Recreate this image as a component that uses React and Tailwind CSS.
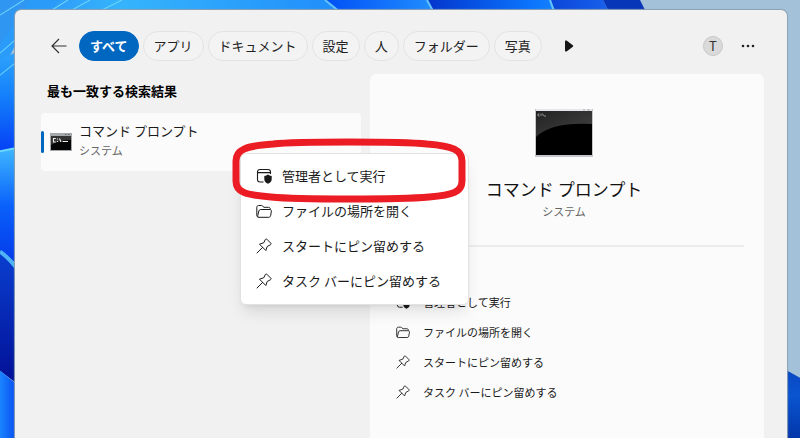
import clsx from "clsx";

const filters = ["すべて", "アプリ", "ドキュメント", "設定", "人", "フォルダー", "写真"];

const AdminIcon = ({ className }) => (
  <svg viewBox="0 0 16 16" fill="none" stroke="currentColor" className={className}>
    <path d="M7.5 14H4a2.5 2.5 0 0 1-2.5-2.5V4A2.5 2.5 0 0 1 4 1.5h8A2.5 2.5 0 0 1 14.500 4v2M1.500 4.600h13" strokeWidth="1.1" />
    <path d="M12 6.600c1.100.9 2.200 1.300 3.700 1.400v3.200c0 2.200-1.500 3.700-3.700 4.600-2.200-.9-3.700-2.400-3.700-4.600V8c1.500-.1 2.600-.5 3.700-1.400Z" fill="currentColor" stroke="none" />
  </svg>
);

const FolderIcon = ({ className }) => (
  <svg viewBox="0 0 16 16" fill="none" stroke="currentColor" strokeWidth="1" strokeLinejoin="round" className={className}>
    <path d="M2.500 14.300C1.400 14.100.8 13.400.8 12.300V4.300c0-1 .8-1.800 1.800-1.800h2.600c.5 0 .9.200 1.300.5l1.500 1.300h4.500c1 0 1.800.8 1.800 1.800v.4" />
    <path d="M4.700 6.500h9.200c1 0 1.600.8 1.500 1.700l-.8 4.600c-.2.900-.9 1.500-1.800 1.500H3c-.9 0-1.500-.7-1.300-1.500l1.200-4.900c.2-.8.900-1.400 1.800-1.400Z" />
  </svg>
);

const PinIcon = ({ className }) => (
  <svg viewBox="0 0 16 16" fill="none" stroke="currentColor" strokeWidth="1" strokeLinejoin="round" strokeLinecap="round" className={className}>
    <path d="M9.300 1.500c.3-.6 1-.7 1.500-.3l4 4c.4.500.3 1.200-.3 1.500L11.200 8.500 9.800 12.500 3.500 6.200l4-1.400ZM6.600 9.400 1 15" />
  </svg>
);

const actions = [
  { label: "管理者として実行", Icon: AdminIcon },
  { label: "ファイルの場所を開く", Icon: FolderIcon },
  { label: "スタートにピン留めする", Icon: PinIcon },
  { label: "タスク バーにピン留めする", Icon: PinIcon },
];

const Wallpaper = () => (
  <svg viewBox="0 0 800 438" preserveAspectRatio="none" className="absolute inset-0 h-full w-full" aria-hidden="true">
    <defs>
      <linearGradient id="top" x1="0" x2="1">
        <stop offset="0" stopColor="#2b8df5" />
        <stop offset=".35" stopColor="#35b4fc" />
        <stop offset="1" stopColor="#1f8cfb" />
      </linearGradient>
      <linearGradient id="mid" x1="0" x2="1">
        <stop offset="0" stopColor="#0050f5" />
        <stop offset="1" stopColor="#2390ff" />
      </linearGradient>
      <linearGradient id="deep" x1="0" x2="1">
        <stop offset="0" stopColor="#0435cc" />
        <stop offset=".75" stopColor="#0a72fb" />
        <stop offset="1" stopColor="#1684ff" />
      </linearGradient>
      <linearGradient id="fold" x1="0" x2="1">
        <stop offset="0" stopColor="#0a45d8" />
        <stop offset="1" stopColor="#1a63ee" />
      </linearGradient>
      <linearGradient id="left1" x1="0" x2="0" y1="0" y2="1">
        <stop offset="0" stopColor="#2fa5fb" />
        <stop offset=".45" stopColor="#1480fb" />
        <stop offset="1" stopColor="#0540f5" />
      </linearGradient>
      <linearGradient id="left2" x1="0" x2="0" y1="0" y2="1">
        <stop offset="0" stopColor="#3fb8ff" />
        <stop offset=".5" stopColor="#0a60fb" />
        <stop offset="1" stopColor="#0338e8" />
      </linearGradient>
      <linearGradient id="left3" x1="0" x2="0" y1="0" y2="1">
        <stop offset="0" stopColor="#0a3fd0" />
        <stop offset="1" stopColor="#020f94" />
      </linearGradient>
      <linearGradient id="left4" x1="0" x2="1" y1="0" y2="0">
        <stop offset="0" stopColor="#1a84ff" />
        <stop offset="1" stopColor="#0540ea" />
      </linearGradient>
      <linearGradient id="right" x1="0" x2="0" y1="0" y2="1">
        <stop offset="0" stopColor="#0a45c0" />
        <stop offset=".4" stopColor="#0a55d0" />
        <stop offset="1" stopColor="#0335a8" />
      </linearGradient>
    </defs>
    <rect width="800" height="438" fill="#a3c2d9" />
    <path d="M0 0H325L350 20H0Z" fill="url(#top)" />
    <path d="M325 0H427L438 20H350Z" fill="url(#mid)" />
    <path d="M427 0H550L560 20H438Z" fill="url(#deep)" />
    <path d="M550 0H603L613 20H560Z" fill="url(#fold)" />
    <path d="M603 0H640L650 20H613Z" fill="#0836b8" />
    <path d="M325 0L350 20M427 0L438 20M550 0L557 20" fill="none" stroke="#63c4f8" strokeWidth="2" />
    <path d="M0 0H60L0 45Z" fill="#2f96f2" />
    <path d="M0 45L30 0H60L20 36L0 75Z" fill="#2b9bfa" />
    <path d="M0 60L20 50V148L0 151Z" fill="url(#left1)" />
    <path d="M0 15L24 0M0 53L15 40M0 75L15 63M52 10L68 0M72 10L90 0M102 10L122 0" fill="none" stroke="#6cd4fb" strokeWidth="1" />
    <path d="M0 151L20 147V265L0 252Z" fill="url(#left2)" />
    <path d="M0 252Q12 260 20 275V385L0 370Z" fill="url(#left3)" />
    <path d="M0 251Q10 258 20 272" fill="none" stroke="#4fb4f5" strokeWidth="4" />
    <path d="M0 370L20 386V438H0Z" fill="url(#left4)" />
    <path d="M0 151L20 147" fill="none" stroke="#6cd8fb" strokeWidth="2" />
    <path d="M780 366L800 377V438H780Z" fill="url(#right)" />
  </svg>
);

const Header = () => (
  <header className="flex h-16 items-center pr-8 pl-9 pt-2">
    <button aria-label="戻る" className="mr-3 text-[#333]">
      <svg viewBox="0 0 16 16" fill="none" stroke="currentColor" strokeWidth="1.2" className="size-4">
        <path d="M15.500 8H1M8 1L1 8l7 7" />
      </svg>
    </button>
    <nav className="flex gap-1">
      {filters.map((name, i) => (
        <button
          key={name}
          className={clsx(
            "h-[30px] rounded-full border px-[10px] text-[13px] whitespace-nowrap",
            i === 0 ? "border-[#0067c0] bg-[#0067c0] font-bold text-white" : "border-[#e3e3e3] bg-[#f3f3f3] text-[#222]"
          )}
        >
          {name}
        </button>
      ))}
    </nav>
    <button aria-label="次へ" className="ml-[22px] text-[#161616]">
      <svg viewBox="0 0 10 12" fill="currentColor" className="h-3 w-[10px]">
        <path d="M1 1.400C1 .5 1.900.1 2.600.6L8.800 5.200c.5.400.5 1.200 0 1.600L2.600 11.400C1.900 11.900 1 11.500 1 10.600Z" />
      </svg>
    </button>
    <button className="ml-auto flex size-5 items-center justify-center rounded-full border border-[#c8c8c8] bg-[#dadada] text-[13px] text-[#333]">
      T
    </button>
    <button aria-label="オプション" className="ml-[18px] text-[#222]">
      <svg viewBox="0 0 14 4" fill="currentColor" className="h-1 w-[14px]">
        <circle cx="2" cy="2" r="1.300" />
        <circle cx="7" cy="2" r="1.300" />
        <circle cx="12" cy="2" r="1.300" />
      </svg>
    </button>
  </header>
);

const ContextMenu = () => (
  <div className="absolute top-10 left-[199px] z-10 w-[229px] rounded-md border border-[#e2e2e2] bg-white pt-1 pb-1.5 shadow-lg">
    <ul>
      {actions.map(({ label, Icon }) => (
        <li key={label}>
          <button className="flex h-[35px] w-full items-center gap-2.5 px-[15px] text-[13px] whitespace-nowrap text-[#1a1a1a]">
            <Icon className="size-4" />
            {label}
          </button>
        </li>
      ))}
    </ul>
    {/* highlight around the first item */}
    <svg viewBox="0 0 236 66" fill="none" className="pointer-events-none absolute -top-4 -left-[10px] h-[66px] w-[236px]" aria-hidden="true">
      <path
        d="M5 23C5 12 14 8 42 6Q60 4 118 4T196 6C222 8 231 12 231 23V43C231 54 222 57 198 59Q176 61 118 61T40 59C14 57 5 54 5 43Z"
        stroke="#eb1c24"
        strokeWidth="7"
      />
    </svg>
  </div>
);

const BestMatch = () => (
  <section className="w-[320px] shrink-0">
    <h2 className="px-1.5 pt-[7px] text-[13px] leading-5 font-bold text-black">最も一致する検索結果</h2>
    <div className="relative mt-3 flex h-[58px] items-center rounded-sm bg-[#fbfbfb]">
      <span className="h-[22px] w-[3px] rounded-full bg-[#0067c0]" />
      <svg viewBox="0 0 22 18" className="ml-1.5 h-[18px] w-[22px]" aria-hidden="true">
        <rect width="22" height="18" fill="#a5a8ab" />
        <rect x="1" y="3" width="20" height="14" fill="#050505" />
        <path d="M1 3H21V7Q10 7 1 12Z" fill="#333" />
        <path d="M15 1.500h1.500M18 1.500h1.500" stroke="#666" />
        <path d="M5.800 5.500H3.500V9H5.800M7.500 5.500v1M7.500 8v1M9.500 5.500L11 9M12.500 8.500H18" fill="none" stroke="#eee" strokeWidth="1.100" />
      </svg>
      <a href="#command-prompt" className="ml-[7px] flex-1 pb-1">
        <span className="block text-[13px] leading-5 text-[#1a1a1a]">コマンド プロンプト</span>
        <span className="block text-[11px] leading-[18px] text-[#666]">システム</span>
      </a>
      <ContextMenu />
    </div>
  </section>
);

const Preview = () => (
  <section id="command-prompt" className="flex flex-1 flex-col rounded-t-md bg-[#fbfbfb] px-5 pt-[34px]">
    <div className="flex flex-col items-center pr-1.5">
      <svg viewBox="0 0 58 50" className="h-[50px] w-[58px]" aria-hidden="true">
        <defs>
          <linearGradient id="gloss" x1="0" x2="1" y1="0" y2="1">
            <stop offset="0" stopColor="#222" />
            <stop offset="1" stopColor="#444" />
          </linearGradient>
        </defs>
        <rect y="1" width="58" height="48" fill="#c4c6ca" />
        <rect x="1" y="1" width="56" height="2" fill="#e4e6e9" />
        <path d="M48 2h2M52 2h3" stroke="#aaa" />
        <rect x="1" y="3" width="56" height="44" fill="#000" />
        <path d="M1 3H57V16Q16 14 1 29Z" fill="url(#gloss)" />
        <path d="M4.500 6H3v2h1.500M6 5.500v2.500M7.500 5.500L8.500 8M9 8h2" fill="none" stroke="#bbb" strokeWidth=".7" />
      </svg>
      <h1 className="mt-[19px] text-[17px] leading-6 text-[#111]">コマンド プロンプト</h1>
      <p className="text-[11px] leading-5 text-[#666]">システム</p>
    </div>
    <hr className="mt-6 border-t-2 border-[#ededed]" />
    <ul className="mt-10 pb-8">
      {actions.map(({ label, Icon }) => (
        <li key={label}>
          <button className="flex h-[30px] w-full items-center gap-[13px] px-1.5 text-[11px] whitespace-nowrap text-[#1a1a1a]">
            <Icon className="size-[14px]" />
            {label}
          </button>
        </li>
      ))}
    </ul>
  </section>
);

const App = () => {
  return (
    <div className="relative flex min-h-screen flex-col overflow-hidden pt-2.5 pr-[13px] pl-[15px] font-['Noto_Sans_CJK_JP',sans-serif]">
      <Wallpaper />
      <main className="relative flex flex-1 flex-col rounded-t-md bg-[#f1f1f1] shadow-[0_0_1px_1px_#8aa0b4]">
        <Header />
        <div className="flex flex-1 gap-[9px] pr-[23px] pl-[26px]">
          <BestMatch />
          <Preview />
        </div>
      </main>
    </div>
  );
};

export default App;
